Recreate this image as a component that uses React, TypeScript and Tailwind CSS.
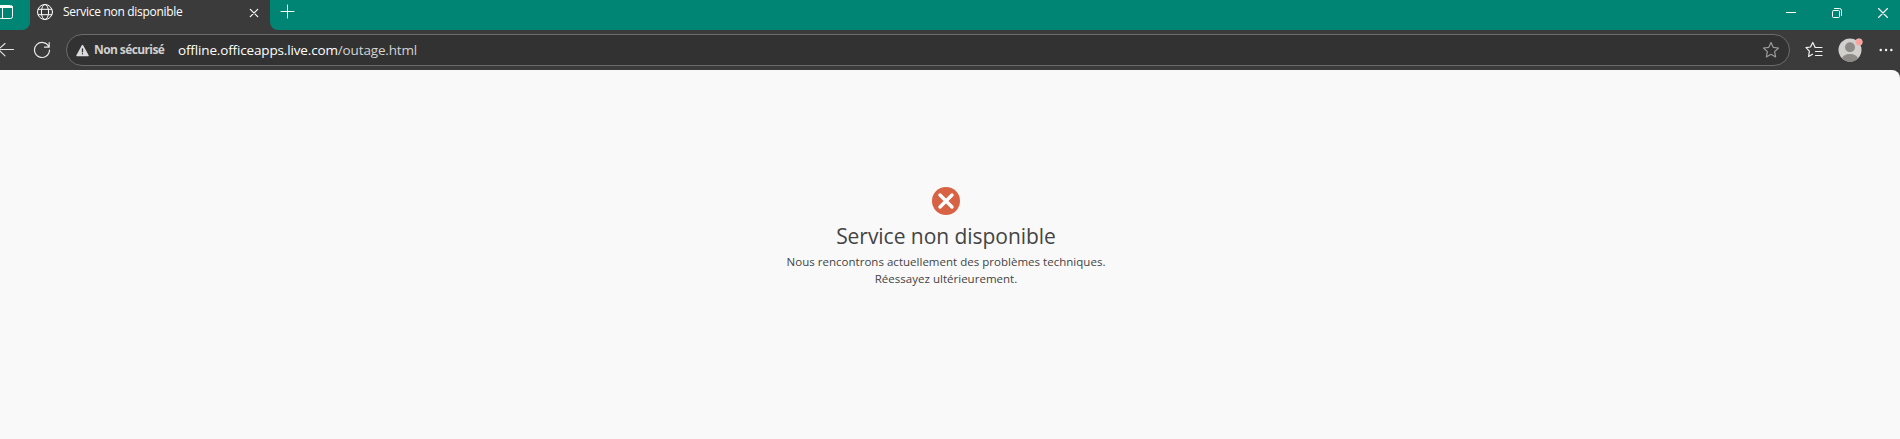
import type { ReactNode } from 'react'

type IconProps = {
  size?: number
  className?: string
  children: ReactNode
}

function Icon({ size = 16, className = '', children }: IconProps) {
  return (
    <svg
      width={size}
      height={size}
      viewBox={`0 0 ${size} ${size}`}
      fill="none"
      stroke="currentColor"
      strokeLinecap="round"
      strokeLinejoin="round"
      className={`block shrink-0 ${className}`}
    >
      {children}
    </svg>
  )
}

function TabStrip() {
  return (
    <div className="flex h-[30px] bg-[#3b3b3b] text-white">
      <div className="w-[30px] rounded-br-lg bg-[#008575]">
        <Icon size={24}>
          <rect x="-1.5" y="5.5" width="14" height="13" rx="2" />
          <path d="M-1.5 6.5H12.5M-1.5 7.5H12.5M2.5 7.5V18" />
        </Icon>
      </div>

      {/* Active tab */}
      <div className="flex w-[240px] pl-[6px]">
        <Icon size={18} className="mt-[3px]">
          <circle cx="9" cy="9" r="7.5" />
          <ellipse cx="9" cy="9" rx="3.6" ry="7.5" />
          <path d="M2.3 6.3H15.7M2.3 11.7H15.7" />
        </Icon>
        <span className="ml-[9px] w-[186px] text-[12px] leading-[24px] tracking-[-0.3px] whitespace-nowrap">
          Service non disponible
        </span>
        <Icon size={10} className="mt-[8px]">
          <path d="M1.3 1.3L8.7 8.7M8.7 1.3L1.3 8.7" strokeWidth="1.2" />
        </Icon>
      </div>

      <div className="flex flex-1 justify-between rounded-bl-lg bg-[#008575] pl-[10px]">
        <Icon size={15} className="mt-[4px]">
          <path d="M1 7.5H14M7.5 1V14" />
        </Icon>
        <div className="flex gap-[36px] pt-[8px] pr-[12px]">
          <Icon size={10}>
            <path d="M0 4.5H10" strokeLinecap="butt" />
          </Icon>
          <Icon size={10} className="overflow-visible">
            <rect x="0.5" y="2.5" width="7" height="7" rx="1" />
            <path d="M2.5 0.5H7.5A2 2 0 0 1 9.5 2.5V7.5" />
          </Icon>
          <Icon size={10}>
            <path d="M0.5 0.5L9.5 9.5M9.5 0.5L0.5 9.5" strokeWidth="1.1" />
          </Icon>
        </div>
      </div>
    </div>
  )
}

function Toolbar() {
  return (
    <div className="flex h-10 items-center bg-[#3b3b3b] text-[#e9e9e9]">
      <Icon size={14}>
        <path d="M-2 6.5H13.5M5 0.5L-1.5 6.5L5 12.8" strokeWidth="1.1" />
      </Icon>
      <Icon size={18} className="ml-[19px]">
        <path d="M15.9 6A7.5 7.5 0 1 0 16.5 9M16.2 1.5V6.2H11.5" strokeWidth="1.2" />
      </Icon>

      {/* Address bar */}
      <div className="ml-[15px] flex h-8 w-[1724px] items-center rounded-full border border-[#6b6b6b] bg-[#323232] pr-[9px] pl-[9px]">
        <Icon size={13} className="text-[#dcdcdc]">
          <path d="M6.5 1.6L12 11.5H1Z" fill="currentColor" strokeWidth="1.5" />
          <path d="M6.5 4.8V7.8M6.5 9.7V9.8" stroke="#323232" strokeWidth="1.3" />
        </Icon>
        <span className="ml-[5px] w-[84px] text-[12px] font-bold tracking-[-0.6px] whitespace-nowrap text-[#d0d0d0]">
          Non sécurisé
        </span>
        <span className="flex-1 text-[13.5px] tracking-[-0.15px] whitespace-nowrap text-white">
          offline.officeapps.live.com<span className="text-[#d2d2d2]">/outage.html</span>
        </span>
        <Icon size={18} className="text-[#9b9b9b]">
          <path d="M9 1.5L11.2 6.3L16.5 7L12.6 10.6L13.6 15.9L9 13.3L4.4 15.9L5.4 10.6L1.5 7L6.8 6.3Z" strokeWidth="1.2" />
        </Icon>
      </div>

      <Icon size={18} className="ml-[15px] text-[#f2f2f2]">
        <path
          d="M11.2 6.5H10.2L7.8 1.5L5.5 6L1 6.7L4.4 10.2L3.6 15.5L7.5 13.3M10.5 6.5H17M10.5 10.5H17M10.5 14.5H17"
          strokeWidth="1.2"
        />
      </Icon>
      <div className="ml-[15px]">
        <svg width="26" height="26" viewBox="0 0 26 26" className="block">
          <defs>
            <clipPath id="avatar">
              <circle cx="12" cy="13" r="11.5" />
            </clipPath>
          </defs>
          <circle cx="12" cy="13" r="11.5" fill="#d2d0ce" />
          <g clipPath="url(#avatar)" fill="#8d8a87">
            <circle cx="12" cy="10.3" r="5" />
            <ellipse cx="12" cy="22" rx="8" ry="5" />
          </g>
          <circle cx="21" cy="5" r="3.3" fill="#ff9f99" stroke="#e8b9b5" strokeWidth="0.8" />
        </svg>
      </div>
      <Icon size={14} className="ml-[15px] text-[#f2f2f2]">
        <path d="M1.7 7H1.8M7 7H7.1M12.3 7H12.4" strokeWidth="2.4" />
      </Icon>
    </div>
  )
}

function OutagePage() {
  return (
    <div className="flex-1 bg-[#3b3b3b]">
      <main className="flex h-full flex-col items-center rounded-tr-lg bg-[#f9f9f9] pt-[118px] pr-2 text-[#444444]">
        <Icon size={28} className="-mt-px text-white">
          <circle cx="14" cy="14" r="14" fill="#d86344" stroke="none" />
          <path d="M8 8L20 20M20 8L8 20" strokeWidth="3.4" />
        </Icon>
        <h1 className="mt-[5px] text-[21px] leading-[32px] tracking-[-0.04px] whitespace-nowrap">
          Service non disponible
        </h1>
        <p className="mt-px text-center text-[11.5px] leading-[17px] tracking-[0.02px] whitespace-nowrap">
          Nous rencontrons actuellement des problèmes techniques.
          <br />
          Réessayez ultérieurement.
        </p>
      </main>
    </div>
  )
}

export default function App() {
  return (
    <div className="flex h-screen flex-col overflow-hidden font-['Open_Sans','Noto_Sans',sans-serif]">
      <TabStrip />
      <Toolbar />
      <OutagePage />
    </div>
  )
}
